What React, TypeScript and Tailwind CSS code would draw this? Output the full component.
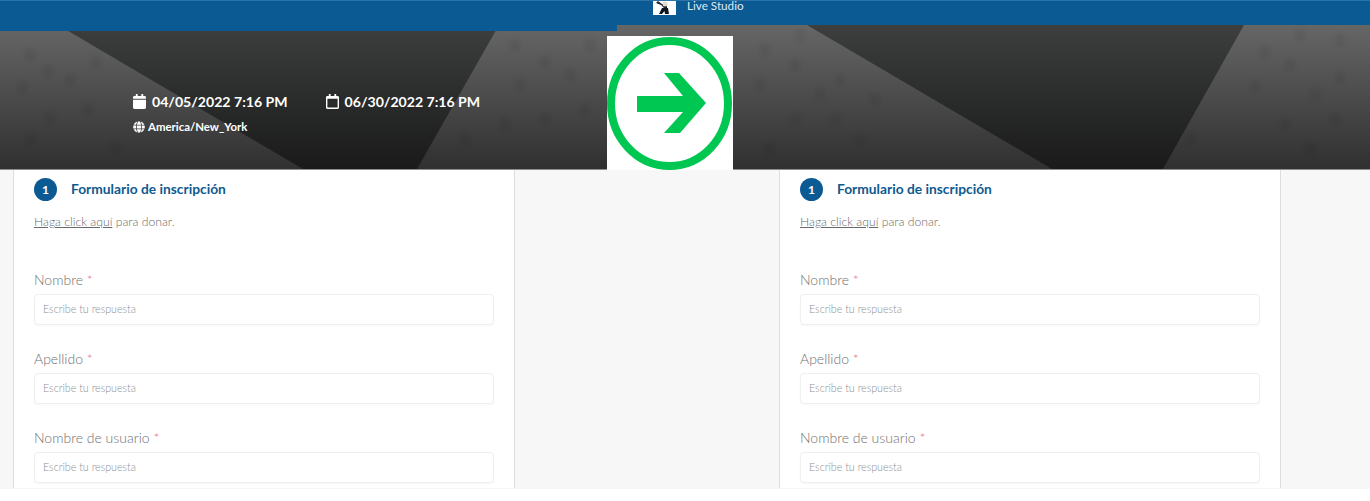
import React from 'react';
import { FaCalendar, FaRegCalendar, FaGlobe } from 'react-icons/fa';

// faint icon pattern on the lighter parts of the banner
const marks = [
  [30, 55], [48, 72], [22, 88], [70, 80], [96, 62], [50, 118], [88, 110], [115, 148], [30, 140],
  [515, 45], [545, 62], [520, 85], [570, 75], [505, 125], [545, 120], [585, 110], [465, 140], [590, 45],
  [800, 35], [765, 50], [795, 65], [760, 85], [840, 80], [820, 95], [875, 100], [795, 120], [835, 120], [860, 140], [770, 150],
  [1300, 35], [1340, 40], [1265, 52], [1290, 65], [1255, 87], [1340, 78], [1315, 95], [1285, 125], [1335, 120], [1190, 140], [1310, 150],
];

function BannerArt() {
  return (
    <svg className="absolute inset-0 w-full h-full" viewBox="0 25 1370 145" preserveAspectRatio="none">
      <defs>
        <linearGradient id="light" x1="0" y1="0" x2="0" y2="1">
          <stop offset="0" stopColor="#656665" />
          <stop offset="1" stopColor="#2f302f" />
        </linearGradient>
        <linearGradient id="dark" x1="0" y1="0" x2="0" y2="1">
          <stop offset="0" stopColor="#3c3f3e" />
          <stop offset="1" stopColor="#191a19" />
        </linearGradient>
        <filter id="soft">
          <feGaussianBlur stdDeviation="2" />
        </filter>
      </defs>
      <rect y="25" width="1370" height="145" fill="url(#light)" />
      <g filter="url(#soft)" fill="#000" opacity="0.05">
        {marks.map(([x, y]) => (
          <rect key={`${x}-${y}`} x={x - 5} y={y - 6} width="10" height="12" rx="3" />
        ))}
      </g>
      <polygon points="58,25 499,25 417,170 303,170" fill="url(#dark)" />
      <polygon points="807,25 1244,25 1163,170 1052,170" fill="url(#dark)" />
    </svg>
  );
}

function ArrowLogo() {
  return (
    <div className="bg-white w-[126px] h-[134px] shrink-0">
      <svg viewBox="0 0 126 134" className="w-full h-full">
        <ellipse cx="62.5" cy="67.5" rx="58.5" ry="62.5" fill="none" stroke="#00c752" strokeWidth="8" />
        <path d="M30 60 H76 L57 37 H72 L99 67 L73 97 H57 L76 76 H30 Z" fill="#00c752" />
      </svg>
    </div>
  );
}

function StudioLogo() {
  return (
    <svg viewBox="0 0 23 14" className="w-[23px] h-[14px] bg-white shrink-0">
      <path d="M3 2 L8 4 L11 7 L14 7 L14 4 L9 3 L5 0 Z" fill="#1c2430" />
      <circle cx="12" cy="3" r="2.5" fill="#e6d9c8" />
      <path d="M9 7 H15 L16 13 H12 L11.5 10 L9 13 H6 Z" fill="#10161f" />
    </svg>
  );
}

function Field({ label }: { label: string }) {
  return (
    <div className="mb-[23px]">
      <label className="block text-[14px] leading-[22px] font-light text-[#6f6f6f] mb-[3px]">
        {label} <span className="text-[#e8798d]">*</span>
      </label>
      <div className="h-[31px] border border-[#efefef] rounded-[4px] bg-white shadow-[0_1px_2px_rgba(0,0,0,0.03)] px-2 flex items-center text-[10.7px] font-light text-[#8f8f8f]">
        Escribe tu respuesta
      </div>
    </div>
  );
}

function FormCard() {
  return (
    <div className="w-[502px] h-[318px] overflow-hidden bg-white border-x border-[#dedede] px-5 pt-[8px]">
      <div className="flex items-center gap-[14px]">
        <div className="w-[23px] h-[23px] rounded-full bg-[#0b5a94] text-white text-[12px] font-bold flex items-center justify-center">1</div>
        <h2 className="text-[13.8px] font-bold text-[#0f5a8f]">Formulario de inscripción</h2>
      </div>
      <p className="mt-[11px] text-[12.2px] leading-5 font-light text-[#6a6a6a]">
        <span className="underline">Haga click aquí</span> para donar.
      </p>
      <div className="mt-[37px]">
        <Field label="Nombre" />
        <Field label="Apellido" />
        <Field label="Nombre de usuario" />
      </div>
    </div>
  );
}

export default function App() {
  return (
    <div className="w-[1370px] h-[501px] overflow-hidden bg-white font-['Lato',sans-serif]">
      <header className="relative h-[25px] bg-[#0b5a94] border-t border-[#2a74aa] pl-[653px] z-10">
        <div className="absolute left-0 -top-px w-[617px] h-[31px] bg-[#0b5a94] border-t border-[#2a74aa]" />
        <div className="relative flex items-start gap-[11px]">
          <StudioLogo />
          <span className="text-[11.7px] leading-[9px] text-[#dfe9f2]">Live Studio</span>
        </div>
      </header>
      <section className="relative h-[145px] border-b border-[#8d8d8d] pl-[607px] flex items-end">
        <BannerArt />
        <div className="absolute left-[133px] top-[66px] text-white">
          <div className="flex items-center gap-[38px]">
            <span className="flex items-center gap-[6px] text-[14.1px] font-bold">
              <FaCalendar className="w-[13px] h-[15px]" />
              04/05/2022 7:16 PM
            </span>
            <span className="flex items-center gap-[6px] text-[14.1px] font-bold">
              <FaRegCalendar className="w-[13px] h-[15px]" />
              06/30/2022 7:16 PM
            </span>
          </div>
          <div className="mt-[6px] flex items-center gap-[3px] text-[11.4px] font-bold">
            <FaGlobe className="w-[12px] h-[12px]" />
            America/New_York
          </div>
        </div>
        <div className="relative -mb-px">
          <ArrowLogo />
        </div>
      </section>
      <main className="h-[319px] bg-[#f7f7f7] pl-[13px] flex gap-[264px]">
        <FormCard />
        <FormCard />
      </main>
    </div>
  );
}
